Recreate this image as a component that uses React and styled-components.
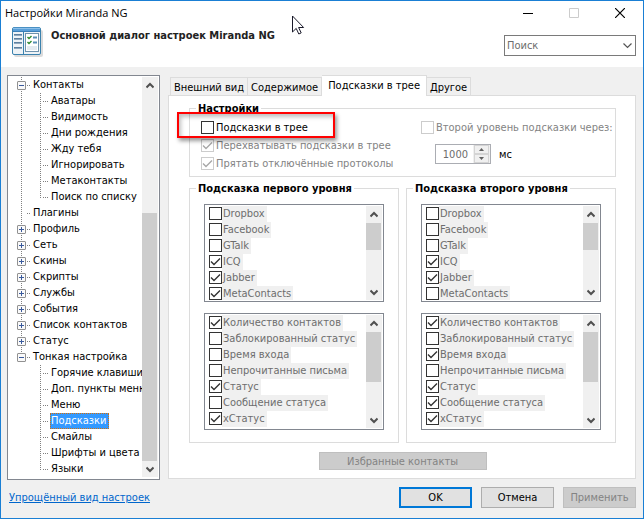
// Libraries
import React from 'react';
import styled, { createGlobalStyle, css } from 'styled-components';

// Global Styles
const GlobalStyle = createGlobalStyle`
  * {
    box-sizing: border-box;
  }
  body {
    margin: 0;
    background-color: #f0f0f0;
  }
  body, button, input, select {
    font-family: 'DejaVu Sans Condensed', 'Noto Sans', sans-serif;
    font-size: 11px;
    line-height: 13px;
    color: #000;
  }
`;

// Styled Components
const Window = styled.div`
  position: relative;
  display: flex;
  flex-direction: column;
  min-height: 100vh;
  border: 1px solid #1a7fd4;
  background-color: #f0f0f0;
`;

const Header = styled.header`
  height: 66px;
  background-color: #fff;
`;

const TitleBar = styled.div`
  display: flex;
  align-items: center;
  justify-content: space-between;
  height: 24px;
  padding-left: 4px;
`;

const Title = styled.span`
  font-family: 'Open Sans', 'Noto Sans', sans-serif;
  font-size: 11px;
  line-height: 16px;
`;

const Captions = styled.div`
  display: flex;
`;

const CaptionButton = styled.button`
  display: flex;
  align-items: center;
  justify-content: center;
  width: 46px;
  height: 24px;
  padding: 0;
  border: 0;
  background: none;
  color: #000;
  &:disabled {
    color: #ccc;
  }
`;

const Banner = styled.div`
  display: flex;
  align-items: flex-start;
  padding: 2px 7px 0 11px;
`;

const Heading = styled.h1`
  flex: 1;
  margin: 2px 0 0 7px;
  font-size: 11px;
  line-height: 13px;
  font-weight: bold;
  color: #222;
`;

const SearchBox = styled.div`
  display: grid;
  align-items: center;
  width: 132px;
  margin-top: 8px;
  & > * {
    grid-area: 1 / 1;
  }
  svg {
    justify-self: end;
    margin-right: 4px;
    pointer-events: none;
  }
`;

const Search = styled.select`
  appearance: none;
  width: 100%;
  height: 21px;
  padding: 0 18px 0 2px;
  border: 1px solid #7a7a7a;
  border-radius: 0;
  background-color: #fff;
  color: #6d6d6d;
`;

const Body = styled.main`
  display: flex;
  align-items: flex-start;
  gap: 8px;
  padding: 8px 7px 0 6px;
`;

const frame = css`
  display: flex;
  padding: 1px;
  border: 1px solid #828790;
  background-color: #fff;
`;

const TreeFrame = styled.nav`
  ${frame}
  flex: none;
  width: 153px;
  padding-bottom: 2px;
`;

const Tree = styled.ul`
  flex: 1;
  min-width: 0;
  margin: 0;
  padding: 0 0 0 8px;
  overflow: hidden;
  list-style: none;
`;

const TreeRow = styled.li`
  display: flex;
  align-items: center;
  height: 16px;
  white-space: nowrap;
`;

const Rail = styled.span`
  display: flex;
  flex: none;
  align-items: center;
  width: 9px;
  height: 16px;
  background-image: repeating-linear-gradient(#808080 0 1px, transparent 1px 2px);
  background-repeat: no-repeat;
  background-position: 4px 0;
  background-size: 1px ${props => ({ full: '16px', half: '9px', none: '0' })[props.$line]};
  & + & {
    margin-left: 10px;
  }
`;

const Dash = styled.span`
  flex: none;
  width: ${props => (props.$nested ? 6 : 4)}px;
  height: 1px;
  margin-left: ${props => (props.$nested ? -2 : 1)}px;
  margin-right: 1px;
  background-image: repeating-linear-gradient(90deg, #808080 0 1px, transparent 1px 2px);
`;

const Expander = styled.button`
  display: flex;
  width: 9px;
  height: 9px;
  padding: 0;
  border: 1px solid #919191;
  border-radius: 1px;
  background-color: #fafafa;
`;

const TreeItem = styled.a`
  padding: 0 2px 0 1px;
  line-height: 16px;
  color: #000;
  text-decoration: none;
  ${props => props.$selected && css`
    outline: 1px dotted #d4700c;
    outline-offset: -1px;
    background-color: #39f;
    color: #fff;
  `}
`;

const Bar = styled.div`
  display: flex;
  flex: none;
  flex-direction: column;
  width: 16px;
  background-color: #f0f0f0;
`;

const ArrowButton = styled.button`
  display: flex;
  flex: none;
  align-items: center;
  justify-content: center;
  height: 16px;
  padding: 0;
  border: 0;
  background: none;
`;

const Track = styled.div`
  display: grid;
  flex: 1;
  grid-template-rows: ${props => props.$rows};
`;

const Thumb = styled.div`
  grid-row: 2;
  margin-right: 1px;
  background-color: #cdcdcd;
`;

const Content = styled.div`
  flex: 1;
  min-width: 0;
`;

const Tabs = styled.div`
  display: flex;
  align-items: flex-end;
  height: 20px;
  padding-left: 2px;
`;

const Tab = styled.button`
  height: 18px;
  padding: 1px 3px 0;
  border: 1px solid #dcdcdc;
  border-left-width: ${props => (props.$first ? 1 : 0)}px;
  border-bottom: 0;
  background-color: #f0f0f0;
  white-space: nowrap;
  &[aria-selected='true'] {
    height: 21px;
    margin-bottom: -1px;
    padding: 0 6px 2px;
    background-color: #fff;
  }
`;

const Panel = styled.section`
  display: flex;
  flex-direction: column;
  padding: 6px 19px 8px 20px;
  border: 1px solid #dcdcdc;
  background-color: #fff;
`;

const Group = styled.fieldset`
  min-width: 0;
  margin: 0;
  padding: 0;
  border: 1px solid #dcdcdc;
`;

const Legend = styled.legend`
  height: 13px;
  margin-left: 6px;
  padding: 0 2px;
  font-weight: bold;
  white-space: nowrap;
`;

const Options = styled.div`
  display: grid;
  grid-template-columns: 220px 1fr;
  padding: 6px 0 6px 11px;
`;

const OptionColumn = styled.div`
  display: flex;
  flex-direction: column;
  align-items: flex-start;
  gap: ${props => props.$gap}px;
`;

const Option = styled.label`
  display: flex;
  align-items: center;
  gap: 2px;
  height: 13px;
  white-space: nowrap;
  color: ${props => (props.$disabled ? '#838383' : '#000')};
`;

const Box = styled.span`
  display: grid;
  flex: none;
  width: 13px;
  height: 13px;
  & > * {
    grid-area: 1 / 1;
  }
  svg {
    visibility: hidden;
    pointer-events: none;
  }
  input:checked + svg {
    visibility: visible;
  }
`;

const Tick = styled.input`
  appearance: none;
  width: 13px;
  height: 13px;
  margin: 0;
  border: 1px solid #333;
  background-color: #fff;
  & + svg {
    color: #333;
  }
  &:disabled {
    border-color: #ccc;
  }
  &:disabled + svg {
    color: #a8a8a8;
  }
`;

const Delay = styled.div`
  display: flex;
  align-items: center;
  margin-left: 14px;
`;

const Spinner = styled.div`
  display: flex;
  width: 56px;
  height: 20px;
  border: 1px solid #abadb3;
`;

const SpinnerInput = styled.input`
  appearance: textfield;
  flex: 1;
  min-width: 0;
  padding: 0 5px 0 0;
  border: 0;
  background-color: #fff;
  color: #6d6d6d;
  text-align: right;
  &::-webkit-inner-spin-button {
    display: none;
  }
`;

const SpinnerButtons = styled.div`
  display: flex;
  flex-direction: column;
  width: 17px;
  padding: 0 1px;
  background-color: #f0f0f0;
`;

const SpinnerButton = styled.button`
  display: flex;
  flex: 1;
  align-items: center;
  justify-content: center;
  padding: 0;
  border: 1px solid #d4d4d4;
  background-color: #f0f0f0;
`;

const Unit = styled.span`
  margin-left: 8px;
`;

const Levels = styled.div`
  display: grid;
  grid-template-columns: 1fr 1fr;
  gap: 7px;
  margin-top: 5px;
`;

const Lists = styled.div`
  display: flex;
  flex-direction: column;
  gap: 11px;
  padding: 9px 14px 12px;
`;

const ListFrame = styled.div`
  ${frame}
  height: ${props => props.$height}px;
`;

const List = styled.ul`
  flex: 1;
  min-width: 0;
  margin: 0;
  padding: 0 0 0 3px;
  overflow: hidden;
  list-style: none;
`;

const ListItem = styled.label`
  display: flex;
  height: 16px;
  white-space: nowrap;
  color: #6d6d6d;
  ${Box} {
    margin-top: 1px;
  }
`;

const ListText = styled.span`
  padding: 0 2px 0 1px;
  line-height: 16px;
  background-color: #f0f0f0;
`;

const Button = styled.button`
  width: 73px;
  height: 21px;
  padding: 0;
  border: 1px solid #adadad;
  background-color: #e1e1e1;
  ${props => props.$primary && css`
    border: 2px solid #0078d7;
  `}
  &:disabled {
    border-color: #bfbfbf;
    background-color: #ccc;
    color: #838383;
  }
`;

const WideButton = styled(Button)`
  align-self: center;
  width: 168px;
  height: 18px;
  margin-top: 9px;
`;

const Footer = styled.footer`
  display: flex;
  align-items: center;
  gap: 9px;
  padding: 7px 7px 9px 8px;
`;

const Link = styled.a`
  margin-right: auto;
  color: #0066cc;
  text-decoration: underline;
`;

// Lies over the first option of the group
const Highlight = styled.div`
  position: absolute;
  top: 111px;
  left: 176px;
  width: 158px;
  height: 26px;
  border: 2px solid #ff0000;
  box-shadow: 2px 3px 4px rgba(0, 0, 0, 0.4), inset 2px 3px 4px rgba(0, 0, 0, 0.25);
  pointer-events: none;
`;

const Pointer = styled.svg`
  position: absolute;
  top: 14px;
  left: 291px;
  pointer-events: none;
`;

// Data
const tree = [
  {
    name: 'Контакты',
    open: true,
    items: ['Аватары', 'Видимость', 'Дни рождения', 'Жду тебя', 'Игнорировать', 'Метаконтакты', 'Поиск по списку'],
  },
  { name: 'Плагины' },
  { name: 'Профиль', items: [] },
  { name: 'Сеть', items: [] },
  { name: 'Скины', items: [] },
  { name: 'Скрипты', items: [] },
  { name: 'Службы', items: [] },
  { name: 'События', items: [] },
  { name: 'Список контактов', items: [] },
  { name: 'Статус', items: [] },
  {
    name: 'Тонкая настройка',
    open: true,
    items: ['Горячие клавиши', 'Доп. пункты меню', 'Меню', 'Подсказки', 'Смайлы', 'Шрифты и цвета', 'Языки'],
  },
];

const tabs = ['Внешний вид', 'Содержимое', 'Подсказки в трее', 'Другое'];

const protocols = ['Dropbox', 'Facebook', 'GTalk', 'ICQ', 'Jabber', 'MetaContacts'];

const fields = [
  'Количество контактов',
  'Заблокированный статус',
  'Время входа',
  'Непрочитанные письма',
  'Статус',
  'Сообщение статуса',
  'xСтатус',
];

const levels = [
  {
    title: 'Подсказка первого уровня',
    protocols: ['ICQ', 'Jabber', 'MetaContacts'],
    fields: ['Количество контактов', 'Статус', 'xСтатус'],
  },
  {
    title: 'Подсказка второго уровня',
    protocols: ['ICQ', 'Jabber'],
    fields: ['Количество контактов', 'Время входа', 'Статус', 'Сообщение статуса', 'xСтатус'],
  },
];

// Icons
const SettingsIcon = () => (
  <svg width="32" height="32" viewBox="0 0 32 32" aria-hidden="true">
    <rect x="2" y="3" width="29" height="27" rx="2" fill="#000" opacity="0.14" />
    <rect x="0.5" y="0.5" width="28" height="27" rx="1.5" fill="#eef3f7" stroke="#3b82ae" />
    <path d="M1 0.500h27v4H1z" fill="#5a9fd8" />
    <path d="M1 1.500h27" stroke="#8cc0ea" />
    <path d="M1 4.500h27" stroke="#3a7fb8" />
    <path d="M11.500 5v22" stroke="#3b82ae" />
    <path d="M2 7.500h8M2 11.500h8M2 15.500h8M2 20.500h8" stroke="#5d7f9e" />
    <path d="M2 8.500h8M2 12.500h8M2 16.500h8M2 21.500h8" stroke="#8fa9bf" />
    <rect x="13.500" y="6.500" width="13" height="18" fill="#fff" stroke="#6f93ad" />
    <path d="M15.500 10l1.500 1.500L19.500 9M15.500 15l1.500 1.500L19.500 14" fill="none" stroke="#2d8a2d" strokeWidth="1.400" />
    <path d="M21 10.500h4M21 15.500h4" stroke="#5a8fb5" strokeWidth="2" />
    <path d="M15 19h10v4H15z" fill="#e4eaf0" />
  </svg>
);

const Chevron = ({ down }) => (
  <svg width="8" height="7" viewBox="0 0 8 7" aria-hidden="true">
    <path
      d={down ? 'M0.500 1.500L4 5l3.500-3.500' : 'M0.500 5.500L4 2l3.500 3.500'}
      fill="none"
      stroke="#505050"
      strokeWidth="2"
    />
  </svg>
);

const CheckMark = () => (
  <svg width="13" height="13" viewBox="0 0 13 13" aria-hidden="true">
    <path d="M2 6.500L5 9.500L11 3.500" fill="none" stroke="currentColor" strokeWidth="1.400" />
  </svg>
);

// Components
const CheckBox = props => (
  <Box>
    <Tick type="checkbox" {...props} />
    <CheckMark />
  </Box>
);

const ScrollBar = ({ rows }) => (
  <Bar>
    <ArrowButton type="button" aria-label="Вверх"><Chevron /></ArrowButton>
    <Track $rows={rows}><Thumb /></Track>
    <ArrowButton type="button" aria-label="Вниз"><Chevron down /></ArrowButton>
  </Bar>
);

const CheckList = ({ items, checked, height, rows }) => (
  <ListFrame $height={height}>
    <List>
      {items.map(item => (
        <li key={item}>
          <ListItem>
            <CheckBox defaultChecked={checked.includes(item)} />
            <ListText>{item}</ListText>
          </ListItem>
        </li>
      ))}
    </List>
    <ScrollBar rows={rows} />
  </ListFrame>
);

const TreeBranch = ({ branch, last }) => (
  <>
    <TreeRow>
      <Rail $line={last ? 'half' : 'full'}>
        {branch.items && (
          <Expander type="button" aria-label={branch.name} aria-expanded={!!branch.open}>
            <svg width="7" height="7" viewBox="0 0 7 7" aria-hidden="true">
              <path d={branch.open ? 'M1 3.500h5' : 'M1 3.500h5M3.500 1v5'} stroke="#3a5a9c" />
            </svg>
          </Expander>
        )}
      </Rail>
      <Dash />
      <TreeItem href="#">{branch.name}</TreeItem>
    </TreeRow>
    {branch.open && branch.items.map((item, i) => (
      <TreeRow key={item}>
        <Rail $line={last ? 'none' : 'full'} />
        <Rail $line={i === branch.items.length - 1 ? 'half' : 'full'} />
        <Dash $nested />
        <TreeItem href="#" $selected={item === 'Подсказки'}>{item}</TreeItem>
      </TreeRow>
    ))}
  </>
);

class App extends React.Component {
  render() {
    return (
      <Window>
        <GlobalStyle />
        <Header>
          <TitleBar>
            <Title>Настройки Miranda NG</Title>
            <Captions>
              <CaptionButton type="button" aria-label="Свернуть">
                <svg width="10" height="10"><path d="M0 5.500h10" stroke="currentColor" /></svg>
              </CaptionButton>
              <CaptionButton type="button" aria-label="Развернуть" disabled>
                <svg width="10" height="10"><path d="M0.500 0.500h9v9h-9z" fill="none" stroke="currentColor" /></svg>
              </CaptionButton>
              <CaptionButton type="button" aria-label="Закрыть">
                <svg width="10" height="10"><path d="M0 0l10 10M10 0L0 10" stroke="currentColor" strokeWidth="1.200" /></svg>
              </CaptionButton>
            </Captions>
          </TitleBar>
          <Banner>
            <SettingsIcon />
            <Heading>Основной диалог настроек Miranda NG</Heading>
            <SearchBox>
              <Search aria-label="Поиск">
                <option>Поиск</option>
              </Search>
              <svg width="9" height="6" viewBox="0 0 9 6" aria-hidden="true">
                <path d="M0.500 0.500l4 4 4-4" fill="none" stroke="#555" strokeWidth="1.200" />
              </svg>
            </SearchBox>
          </Banner>
        </Header>
        <Body>
          <TreeFrame>
            <Tree>
              {tree.map((branch, i) => (
                <TreeBranch key={branch.name} branch={branch} last={i === tree.length - 1} />
              ))}
            </Tree>
            <ScrollBar rows="120fr 248fr 0fr" />
          </TreeFrame>
          <Content>
            <Tabs role="tablist">
              {tabs.map((tab, i) => (
                <Tab key={tab} type="button" role="tab" $first={i === 0} aria-selected={i === 2}>{tab}</Tab>
              ))}
            </Tabs>
            <Panel>
              <Group>
                <Legend>Настройки</Legend>
                <Options>
                  <OptionColumn $gap={5}>
                    <Option>
                      <CheckBox />
                      Подсказки в трее
                    </Option>
                    <Option $disabled>
                      <CheckBox defaultChecked disabled />
                      Перехватывать подсказки в трее
                    </Option>
                    <Option $disabled>
                      <CheckBox defaultChecked disabled />
                      Прятать отключённые протоколы
                    </Option>
                  </OptionColumn>
                  <OptionColumn $gap={10}>
                    <Option $disabled>
                      <CheckBox disabled />
                      Второй уровень подсказки через:
                    </Option>
                    <Delay>
                      <Spinner>
                        <SpinnerInput type="number" defaultValue="1000" aria-label="мс" disabled />
                        <SpinnerButtons>
                          <SpinnerButton type="button" aria-label="Больше" disabled>
                            <svg width="5" height="3"><path d="M0 3l2.500-3L5 3z" fill="#606060" /></svg>
                          </SpinnerButton>
                          <SpinnerButton type="button" aria-label="Меньше" disabled>
                            <svg width="5" height="3"><path d="M0 0l2.500 3L5 0z" fill="#606060" /></svg>
                          </SpinnerButton>
                        </SpinnerButtons>
                      </Spinner>
                      <Unit>мс</Unit>
                    </Delay>
                  </OptionColumn>
                </Options>
              </Group>
              <Levels>
                {levels.map(level => (
                  <Group key={level.title}>
                    <Legend>{level.title}</Legend>
                    <Lists>
                      <CheckList items={protocols} checked={level.protocols} height={98} rows="1fr 27fr 34fr" />
                      <CheckList items={fields} checked={level.fields} height={117} rows="1fr 50fr 30fr" />
                    </Lists>
                  </Group>
                ))}
              </Levels>
              <WideButton type="button" disabled>Избранные контакты</WideButton>
            </Panel>
          </Content>
        </Body>
        <Footer>
          <Link href="#">Упрощённый вид настроек</Link>
          <Button type="button" $primary>OK</Button>
          <Button type="button">Отмена</Button>
          <Button type="button" disabled>Применить</Button>
        </Footer>
        <Highlight />
        <Pointer width="13" height="20" viewBox="0 0 13 20" aria-hidden="true">
          <path
            d="M0.500 1v16l3.700-3.600 2.600 5.600 2.400-1.100-2.600-5.400h5z"
            fill="#fff"
            stroke="#1a1a2a"
          />
        </Pointer>
      </Window>
    );
  }
}

export default App;
